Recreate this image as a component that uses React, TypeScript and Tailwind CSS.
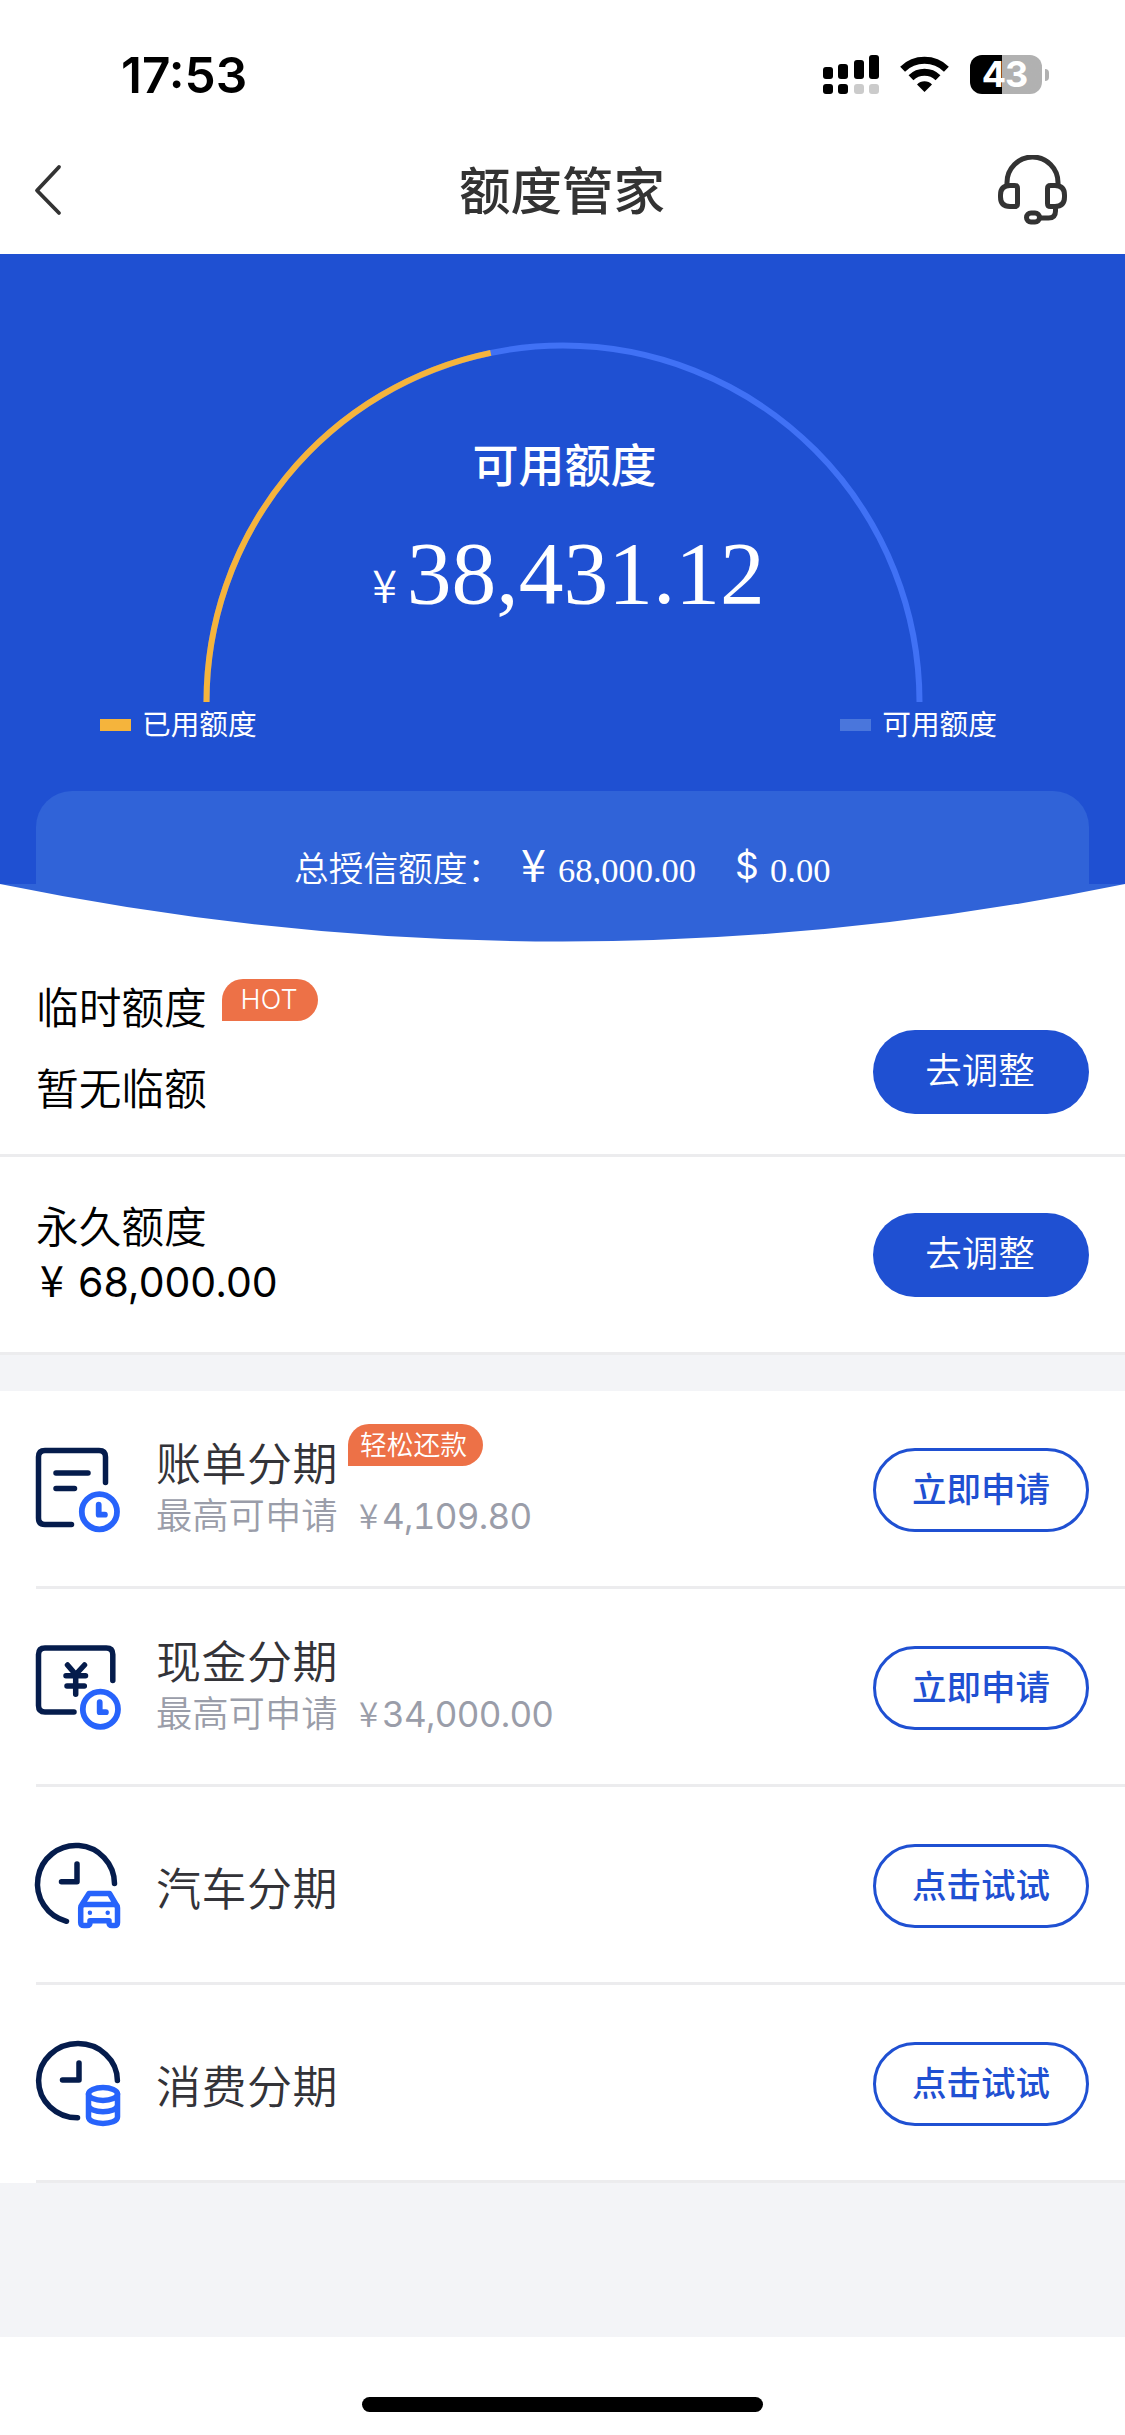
import React from 'react';

const cjk = "font-['Noto_Sans_CJK_SC',sans-serif]";
const latin = "font-['Inter','Noto_Sans_CJK_SC',sans-serif]";
const serif = "font-['Liberation_Serif',serif]";

const StatusBar: React.FC = () => {
  return (
    <div className="flex h-[150px] items-start pl-[121px] pr-[76px] pt-[55px]">
      <span className={`${latin} text-[49.5px] leading-[41px] font-semibold text-black`}>17:53</span>
      <svg className="ml-auto h-[39px] w-[56px]" viewBox="0 0 56 39">
        <rect x="0" y="12" width="10" height="12" rx="3" />
        <rect x="15" y="9" width="10" height="15" rx="3" />
        <rect x="31" y="5" width="10" height="19" rx="3" />
        <rect x="46" y="0" width="10" height="24" rx="3" />
        <rect x="0" y="29" width="10" height="10" rx="3" />
        <rect x="15" y="29" width="10" height="10" rx="3" />
        <rect x="31" y="29" width="10" height="10" rx="3" fill="#cbcbcb" />
        <rect x="46" y="29" width="10" height="10" rx="3" fill="#cbcbcb" />
      </svg>
      <svg className="ml-[21px] mt-[1px] h-[37px] w-[49px]" viewBox="0 0 49 37" fill="none" stroke="#000" strokeWidth="7">
        <path d="M2.6 13.2A31.5 31.5 0 0 1 46.4 13.2" />
        <path d="M11 21.8A19.4 19.4 0 0 1 38 21.8" />
        <path d="M24.5 36L17 28.4A10.6 10.6 0 0 1 32 28.4Z" fill="#000" stroke="none" />
      </svg>
      <div className="ml-[21px] flex h-[39px] w-[72px] items-center justify-center rounded-[12px] bg-linear-to-r from-black from-44% to-[#b1b1b1] to-44% pr-[3px]">
        <span className={`${latin} text-[36px] leading-[39px] font-bold tracking-[-1px] text-white`}>43</span>
      </div>
      <span className="ml-[3px] mt-[14px] h-[12px] w-[4px] rounded-r-full bg-[#b1b1b1]" />
    </div>
  );
};

const NavBar: React.FC = () => {
  return (
    <div className="flex h-[104px] items-start justify-between pl-[33px] pr-[57px]">
      <svg className="mt-[14px] h-[52px] w-[70px]" viewBox="0 0 70 52" fill="none" stroke="#333" strokeWidth="3.8" strokeLinecap="round" strokeLinejoin="round">
        <path d="M26 3L4 26.5L26 49" />
      </svg>
      <h1 className={`${cjk} pl-[24px] text-[51.5px] leading-[75px] font-medium text-[#333]`}>额度管家</h1>
      <svg className="mt-[5px] h-[71px] w-[71px]" viewBox="0 0 71 71" fill="none" stroke="#333" strokeWidth="5">
        <path d="M10 30V27.5A25.5 25.5 0 0 1 61 27.5V30" />
        <path d="M13 30.5H17.5Q20.5 30.5 20.5 33.5V48.5Q20.5 51.5 17.5 51.5H13Q3.5 51.5 3.5 42V40Q3.5 30.5 13 30.5Z" />
        <path d="M58 30.5H53.5Q50.5 30.5 50.5 33.5V48.5Q50.5 51.5 53.5 51.5H58Q67.5 51.5 67.5 42V40Q67.5 30.5 58 30.5Z" />
        <path d="M58.5 52V56Q58.5 63 51.5 63H42" />
        <rect x="29.5" y="58" width="13" height="9" rx="4.5" />
      </svg>
    </div>
  );
};

const Legend: React.FC<{ swatch: string; text: string }> = ({ swatch, text }) => {
  return (
    <div className="flex items-center">
      <span className={`h-[12px] w-[31px] ${swatch}`} />
      <span className={`${cjk} ml-[11px] pb-[4px] text-[28.7px] leading-[40px] text-white`}>{text}</span>
    </div>
  );
};

const LimitPanel: React.FC = () => {
  return (
    <section>
      <div className="h-[630px] overflow-hidden bg-[#1f50d2] px-9 pt-[88px]">
        <div className="grid justify-center">
          <svg className="col-start-1 row-start-1 h-[360px] w-[720px]" viewBox="0 0 720 360" fill="none" strokeWidth="6">
            <path d="M3.5 360A356.5 356.5 0 0 1 716.5 360" stroke="#4071f5" />
            <path d="M3.5 360A356.5 356.5 0 0 1 287.7 10.9" stroke="#f5b43c" />
          </svg>
          <div className="col-start-1 row-start-1 flex flex-col items-center pt-[90px] text-white">
            <p className={`${cjk} pl-[4px] text-[46px] leading-[60px] font-medium`}>可用额度</p>
            <p className="flex items-baseline pl-[12px] pt-[41px]">
              <span className={`${cjk} text-[45px] leading-[60px] font-[350]`}>¥</span>
              <span className={`${serif} ml-[10px] text-[89.5px] leading-[80px]`}>38,431.12</span>
            </p>
          </div>
        </div>
        <div className="flex justify-between pl-[64px] pr-[92px] pt-[1px]">
          <Legend swatch="bg-[#f5b43c]" text="已用额度" />
          <Legend swatch="bg-[#4a76dc]" text="可用额度" />
        </div>
        <div className="mt-[44px] flex h-[150px] items-baseline rounded-t-[36px] bg-[#3063d8] pl-[258px] pt-[47px] whitespace-nowrap text-white">
          <span className={`${cjk} w-[227px] text-[34.7px] leading-[50px] font-[350]`}>总授信额度：</span>
          <span className={`${cjk} w-[37px] text-[45px] leading-[50px]`}>¥</span>
          <span className={`${serif} w-[177px] text-[34.5px] leading-[50px]`}>68,000.00</span>
          <span className={`${latin} w-[35px] -translate-y-[3px] text-[37px] leading-[50px]`}>$</span>
          <span className={`${serif} text-[34.5px] leading-[50px]`}>0.00</span>
        </div>
      </div>
      <svg className="block h-[60px] w-full" viewBox="0 0 1125 60">
        <path d="M0 0H1125Q562.5 115 0 0Z" fill="#3063d8" />
      </svg>
    </section>
  );
};

const Tag: React.FC<{ className: string; children: React.ReactNode }> = ({ className, children }) => {
  return (
    <span className={`flex h-[42px] items-center justify-center rounded-[21px] rounded-bl-none bg-[#ed7147] text-white ${className}`}>
      {children}
    </span>
  );
};

const AdjustButton: React.FC<{ className: string }> = ({ className }) => {
  return (
    <button className={`${cjk} h-[84px] w-[216px] rounded-full bg-[#1f50d2] pr-[2px] pb-[5px] text-[36.5px] font-[350] text-white ${className}`}>去调整</button>
  );
};

const navy = '#051c4c';
const blue = '#2763fb';

const SmallClock: React.FC<{ cx: number; cy: number }> = ({ cx, cy }) => (
  <g transform={`translate(${cx} ${cy})`} stroke={blue} strokeWidth="5.8">
    <circle r="17.6" />
    <path d="M-0.7 -7V3H5.5" />
  </g>
);

const BillIcon: React.FC = () => (
  <>
    <path d="M35.5 76.5H9Q2.5 76.5 2.5 70V9Q2.5 2.5 9 2.5H63Q69.5 2.5 69.5 9V34.5M20 25H52M20 40.5H38.5" stroke={navy} />
    <SmallClock cx={63.4} cy={63.7} />
  </>
);

const CashIcon: React.FC = () => (
  <>
    <path d="M38 66H9Q2.5 66 2.5 59.5V8.5Q2.5 2 9 2H70.3Q76.8 2 76.8 8.5V34.5" stroke={navy} />
    <path d="M31.5 19L39.7 28.5L48.5 19M30 29.7H49.5M31 40H48.3M39.7 29V48.3" stroke={navy} />
    <SmallClock cx={64.4} cy={63.2} />
  </>
);

const CarIcon: React.FC = () => (
  <>
    <path d="M30.5 77.3A38.5 38.5 0 1 1 78.5 39.5M41 20V37.7H25.5" stroke={navy} />
    <path d="M46 60.5L53 49.5H73.5L80 60.5M44.7 64Q44.7 60.5 48.5 60.5H78Q81.5 60.5 81.5 64V78.5Q81.5 81.5 78.5 81.5H76Q73 81.5 73 78.5V76.7H54V78.5Q54 81.5 51 81.5H48Q44.7 81.5 44.7 78.5Z" stroke={blue} />
    <path d="M53.9 68.7V68.8M71.7 68.7V68.8" stroke={blue} strokeWidth="4.5" />
  </>
);

const CoinIcon: React.FC = () => (
  <>
    <path d="M41.5 75.8A39.4 37.1 0 1 1 81.4 38.5M43 21V38H26.5" stroke={navy} />
    <ellipse cx="67" cy="52" rx="14.5" ry="6.5" stroke={blue} />
    <path d="M52.5 52V75C52.5 83.5 81.5 83.5 81.5 75V52M52.5 63C52.5 72 81.5 72 81.5 63" stroke={blue} />
  </>
);

interface IInstallmentRowProps {
  icon: React.ReactNode;
  title: string;
  amount?: string;
  tag?: string;
  action: string;
}

const InstallmentRow: React.FC<IInstallmentRowProps> = ({ icon, title, amount, tag, action }) => {
  return (
    <li className="flex h-[198px] items-start border-b-[3px] border-[#ececee] pr-9 pt-[57px]">
      <svg className="h-[84px] w-[84px] overflow-visible" viewBox="0 0 84 84" fill="none" strokeWidth="5.5" strokeLinecap="round" strokeLinejoin="round">
        {icon}
      </svg>
      <div className={amount ? 'ml-[36px] -mt-[24px]' : 'ml-[36px] mt-[13px]'}>
        <div className="flex">
          <h2 className={`${cjk} ${amount ? 'pt-[8px]' : ''} text-[45px] leading-[60px] font-[350] tracking-[0.5px] text-[#333338]`}>{title}</h2>
          {tag && (
            <Tag className={`${cjk} ml-[10px] w-[135px] pr-[4px] pb-[2px] text-[26.8px] font-[350]`}>{tag}</Tag>
          )}
        </div>
        {amount && (
          <p className="flex items-baseline pt-[1px] whitespace-nowrap text-[#9a9da9]">
            <span className={`${cjk} w-[203px] text-[36.3px] leading-[40px] font-[350]`}>最高可申请</span>
            <span className={`${cjk} w-[23px] text-[35px] leading-[40px] font-[350]`}>¥</span>
            <span className={`${latin} text-[35px] leading-[40px] tracking-[-0.7px] tabular-nums`}>{amount}</span>
          </p>
        )}
      </div>
      <button className={`${cjk} ml-auto h-[84px] w-[216px] rounded-full border-[3px] border-[#1f50d2] pb-[4px] text-[34.5px] font-medium text-[#1f50d2]`}>{action}</button>
    </li>
  );
};

const App: React.FC = () => {
  return (
    <main className="h-[2435px] w-[1125px] overflow-hidden bg-white">
      <StatusBar />
      <NavBar />
      <LimitPanel />

      <section className="flex h-[213px] items-start justify-between border-b-[3px] border-[#ececee] px-9">
        <div className="pt-[31px]">
          <div className="flex items-start">
            <p className={`${cjk} text-[42.7px] leading-[60px] font-[350] text-black`}>临时额度</p>
            <Tag className={`${latin} mt-[4px] ml-[15px] w-[96px] pr-[1px] text-[27px] font-light tracking-[0.3px]`}>HOT</Tag>
          </div>
          <p className={`${cjk} pt-[21px] text-[42.7px] leading-[60px] font-[350] text-black`}>暂无临额</p>
        </div>
        <AdjustButton className="mt-[86px]" />
      </section>

      <section className="flex h-[198px] items-start justify-between border-b-[3px] border-[#ececee] px-9">
        <div className="pt-[39px] text-black">
          <p className={`${cjk} text-[42.7px] leading-[57px] font-[350]`}>永久额度</p>
          <p className="flex items-baseline">
            <span className={`${cjk} w-[42px] pl-[4px] text-[43px] leading-[50px]`}>¥</span>
            <span className={`${latin} text-[41px] leading-[50px]`}>68,000.00</span>
          </p>
        </div>
        <AdjustButton className="mt-[56px]" />
      </section>

      <div className="h-9 bg-[#f3f4f7]" />

      <ul className="bg-white pl-9">
        <InstallmentRow icon={<BillIcon />} title="账单分期" amount="4,109.80" tag="轻松还款" action="立即申请" />
        <InstallmentRow icon={<CashIcon />} title="现金分期" amount="34,000.00" action="立即申请" />
        <InstallmentRow icon={<CarIcon />} title="汽车分期" action="点击试试" />
        <InstallmentRow icon={<CoinIcon />} title="消费分期" action="点击试试" />
      </ul>

      <div className="h-[154px] bg-[#f3f4f7]" />
      <div className="flex justify-center pt-[60px]">
        <div className="h-[15px] w-[401px] rounded-full bg-black" />
      </div>
    </main>
  );
};

export default App;
